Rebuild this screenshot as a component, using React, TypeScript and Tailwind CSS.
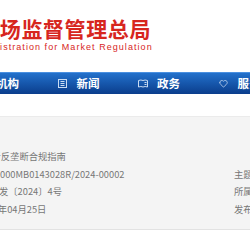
import { Heart } from "lucide-react"

const cjk = { fontFamily: '"Noto Sans CJK SC", "Noto Sans", sans-serif' }

function NewsIcon() {
  return (
    <svg width="9" height="9" viewBox="0 0 9 9" fill="none" stroke="#c9dcf3" strokeWidth="1">
      <rect x="0.5" y="0.5" width="8" height="8" />
      <path d="M2.5 2.5h4M2.5 4.5h4M2.5 6.5h4" />
    </svg>
  )
}

function BookIcon() {
  return (
    <svg width="10" height="9" viewBox="0 0 10 9" fill="none" stroke="#c9dcf3" strokeWidth="1">
      <path d="M0.5 1.5 Q3 0.5 5 1.5 Q7 0.5 9.5 1.5 V8 Q7 7 5 8 Q3 7 0.5 8 Z" />
      <path d="M6.5 3.5h2M6.5 5.5h2" />
    </svg>
  )
}

export default function App() {
  return (
    <div className="w-[250px] h-[250px] overflow-hidden bg-white" style={cjk}>
      <header className="h-[72px] pt-[18px] overflow-hidden whitespace-nowrap">
        <div className="ml-[-65px] text-[21px] leading-[21px] font-bold tracking-[0.6px] text-[#d7261e]">
          国家市场监督管理总局
        </div>
        <div
          className="ml-[-60px] mt-[3px] text-[9px] leading-[10px] tracking-[1.05px] text-[#d7261e]"
          style={{ fontFamily: '"Liberation Sans", Arial, sans-serif' }}
        >
          State Administration for Market Regulation
        </div>
      </header>

      <nav className="h-[22px] bg-gradient-to-b from-[#2371cc] to-[#0b3d8c] border-t border-[#4b90e0] flex items-center whitespace-nowrap overflow-hidden">
        <div className="flex items-center ml-[-23px] text-white text-[11.5px] font-bold">
          <div className="w-[80.5px] shrink-0 flex items-center">
            <span className="w-[19px] shrink-0"><NewsIcon /></span>
            <span>机构</span>
          </div>
          <div className="w-[80.5px] shrink-0 flex items-center">
            <span className="w-[19px] shrink-0"><NewsIcon /></span>
            <span>新闻</span>
          </div>
          <div className="w-[80.5px] shrink-0 flex items-center">
            <span className="w-[19px] shrink-0"><BookIcon /></span>
            <span>政务</span>
          </div>
          <div className="w-[80.5px] shrink-0 flex items-center">
            <span className="w-[19px] shrink-0">
              <Heart size={9} strokeWidth={2} color="#c9dcf3" />
            </span>
            <span>服务</span>
          </div>
        </div>
      </nav>

      <div className="h-[22px]" />

      <section className="bg-[#f4f4f4] border-t border-[#ebebeb] border-b border-b-[#e2e2e2] h-[114px] pt-[31px] overflow-hidden whitespace-nowrap text-[9.3px] leading-[17.6px] text-[#777]">
        <div className="ml-[-8.5px]">者反垄断合规指南</div>
        <div className="grid grid-cols-[234px_1fr]">
          <div>000MB0143028R/2024-00002</div>
          <div>主题分类</div>
          <div className="ml-[-10.3px]">监发〔2024〕4号</div>
          <div>所属机构</div>
          <div className="ml-[-7.3px]">4年04月25日</div>
          <div>发布日期</div>
        </div>
      </section>
    </div>
  )
}
